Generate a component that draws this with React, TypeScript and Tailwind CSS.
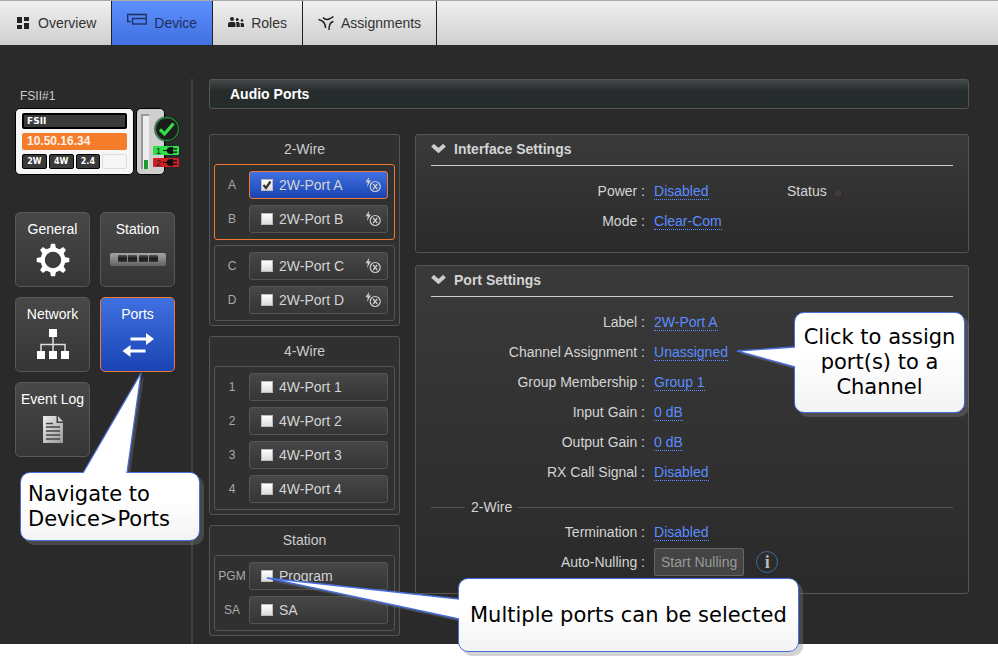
import { type ReactNode, useState } from 'react';

type Point = [number, number];

function OverviewIcon() {
  return (
    <svg width="16" height="16" viewBox="0 0 16 16" fill="#222" aria-hidden="true">
      <path d="M2 2h5v6H2zM9 2h5v4H9zM2 10h5v4H2zM9 8h5v6H9z" />
    </svg>
  );
}

function DeviceIcon() {
  return (
    <svg width="20" height="20" viewBox="0 0 20 20" fill="none" stroke="#1f2f5c" strokeWidth="1.3" aria-hidden="true">
      <path d="M3.5 8.500H.7v-7h18.600v3.500" />
      <rect x="5.500" y="5.500" width="13.800" height="5.500" />
    </svg>
  );
}

function RolesIcon() {
  return (
    <svg width="16" height="16" viewBox="0 0 16 16" fill="#222" aria-hidden="true">
      <circle cx="4" cy="4" r="2" />
      <circle cx="9.200" cy="4.500" r="1.500" />
      <circle cx="14" cy="5.500" r="1.300" />
      <path d="M0 12V9q0-2 2-2h3.500q2 0 2 2v3zM8.500 12V9q0-1-.8-1.900h2.500q1.500 0 1.500 1.700V12zM12.700 12V9.300q0-.9-.4-1.300h2.200q1.500 0 1.500 1.300V12z" />
    </svg>
  );
}

function AssignmentsIcon() {
  return (
    <svg width="16" height="16" viewBox="0 0 16 16" fill="none" stroke="#222" strokeWidth="1.500" aria-hidden="true">
      <path d="M.5 4.500Q7.500 6 7.500 13M5 2.500q2.500 3 6 1.500Q13.500 3 15.500 1.500M15.500 6.500Q11 7 11 15" />
    </svg>
  );
}

function GearIcon() {
  return (
    <svg width="34" height="34" viewBox="-17 -17 34 34" aria-hidden="true">
      <circle r="10.300" fill="none" stroke="#fff" strokeWidth="4.200" />
      {[0, 45, 90, 135, 180, 225, 270, 315].map(angle => (
        <path key={angle} d="M-3-11.500L-2-16.300H2L3-11.500z" fill="#fff" transform={`rotate(${angle})`} />
      ))}
    </svg>
  );
}

function StationIcon() {
  return (
    <svg width="56" height="34" viewBox="0 0 56 34" aria-hidden="true">
      <defs>
        <linearGradient id="station-body" x1="0" y1="0" x2="0" y2="1">
          <stop offset="0" stopColor="#a5a5a5" />
          <stop offset="1" stopColor="#626262" />
        </linearGradient>
        <linearGradient id="station-key" x1="0" y1="0" x2="0" y2="1">
          <stop offset="0" stopColor="#555" />
          <stop offset="0.500" stopColor="#1c1c1c" />
          <stop offset="1" stopColor="#333" />
        </linearGradient>
      </defs>
      <rect y="10" width="56" height="13" rx="2" fill="url(#station-body)" />
      {[8, 18, 29, 39].map(x => (
        <rect key={x} x={x} y="12" width="9" height="7" rx="1" fill="url(#station-key)" />
      ))}
    </svg>
  );
}

function NetworkIcon() {
  return (
    <svg width="34" height="34" viewBox="0 0 34 34" fill="#fff" aria-hidden="true">
      <path d="M13 1h8v8h-8zM1 23h8v8H1zM13 23h8v8h-8zM25 23h8v8h-8z" />
      <path d="M17 9v14M5 23v-6.500h24V23" fill="none" stroke="#ddd" strokeWidth="1.500" />
    </svg>
  );
}

function PortsIcon() {
  return (
    <svg width="34" height="34" viewBox="0 0 34 34" fill="#fff" aria-hidden="true">
      <path d="M9.500 9.500H25V5l8 6-8 6v-4.500H9.500zM24.500 21.500H9.500V17l-8 6 8 6v-4.500h15z" />
    </svg>
  );
}

function LogIcon() {
  return (
    <svg width="20" height="34" viewBox="0 0 20 34" aria-hidden="true">
      <defs>
        <linearGradient id="log-page" x1="0" y1="0" x2="1" y2="1">
          <stop offset="0" stopColor="#eee" />
          <stop offset="1" stopColor="#999" />
        </linearGradient>
      </defs>
      <path d="M0 3h13.500v7H20v20H0z" fill="url(#log-page)" />
      <path d="M15 3l5 5.500h-5z" fill="#ccc" />
      <path d="M3 10.500h7M3 14h14M3 18h14M3 22h14M3 26h14" stroke="#444" strokeWidth="1.300" />
    </svg>
  );
}

function SignalOffIcon() {
  return (
    <svg width="16" height="16" viewBox="0 0 16 16" fill="none" stroke="#ccc" aria-hidden="true">
      <path d="M4 0L.5 5.200h2.300L2 10l4-6.500H3.800z" fill="#ccc" stroke="none" />
      <circle cx="10.200" cy="9.500" r="5" strokeWidth="1.200" />
      <path d="M8.200 7l4 5M12.200 7l-4 5" strokeWidth="1.300" />
    </svg>
  );
}

function ChevronIcon() {
  return (
    <svg width="15" height="10" viewBox="0 0 15 10" aria-hidden="true">
      <path d="M1.500 1.300L7.500 6.500l6-5.200" fill="none" stroke="#ccc" strokeWidth="4" />
    </svg>
  );
}

function PlugBadge({ label, color }: { label: string; color: string }) {
  return (
    <svg width="26" height="9" viewBox="0 0 26 9" aria-hidden="true">
      <rect width="26" height="9" rx="1" fill={color} />
      <text x="3" y="8" fontSize="9" fontFamily="Liberation Sans, sans-serif" fill="#222">
        {label}
      </text>
      <path d="M10 4h3.500q1-3 4.500-3h2v1.200h4v1.300h-4v2h4v1.300h-4V8h-2q-3.500 0-4.500-3H10z" fill="#111" />
    </svg>
  );
}

function Callout({ className, bubble, tail, children }: { className: string; bubble: string; tail: Point[]; children: ReactNode }) {
  const points = tail.map(point => point.join(',')).join(' ');
  return (
    <div className={`absolute z-10 ${className}`}>
      <svg className="pointer-events-none absolute top-0 left-0 overflow-visible" width="1" height="1" aria-hidden="true">
        <polygon points={points} fill="#808080" fillOpacity="0.3" transform="translate(3 3)" />
      </svg>
      <div
        className={`relative flex items-center rounded-[10px] border border-[#4a6fdc] bg-linear-to-b from-white from-40% to-[#f3f3f3] font-['DejaVu_Sans',sans-serif] text-[21px] leading-[25px] text-black shadow-[4px_4px_0_rgba(128,128,128,0.35)] ${bubble}`}
      >
        {children}
      </div>
      <svg className="pointer-events-none absolute top-0 left-0 overflow-visible" width="1" height="1" aria-hidden="true">
        <polygon points={points} fill="#fff" />
        <polyline points={points} fill="none" stroke="#4a6fdc" strokeWidth="1.300" />
      </svg>
    </div>
  );
}

const TABS = [
  { label: 'Overview', icon: <OverviewIcon /> },
  { label: 'Device', icon: <DeviceIcon />, active: true },
  { label: 'Roles', icon: <RolesIcon /> },
  { label: 'Assignments', icon: <AssignmentsIcon /> },
];

function TopNav() {
  return (
    <nav className="flex h-[45px] border-t border-[#a8a8a8] bg-linear-to-b from-[#f0f0f0] to-[#cfcfcf]">
      {TABS.map(tab => (
        <a
          key={tab.label}
          href="#"
          className={`flex items-center gap-[7px] border-r border-[#222] px-[15px] ${
            tab.active ? 'bg-linear-to-b from-[#5c90ff] to-[#4270e0] text-[#1f2f5c]' : 'text-[#333]'
          }`}
        >
          {tab.icon}
          {tab.label}
        </a>
      ))}
    </nav>
  );
}

function DeviceCard() {
  return (
    <div className="flex gap-[2px]">
      <div className="w-[119px] rounded-[5px] border border-black bg-[#f6f6f6] px-[6px] pt-1 pb-[5px]">
        <div className="h-4 rounded-[2px] border-2 border-black bg-[#3a3a3a] pl-[3px] font-['DejaVu_Sans',sans-serif] text-[9px] leading-3 font-bold text-white">
          FSII
        </div>
        <div className="mt-1 h-[17px] rounded-[2px] bg-[#f57c2b] pl-[5px] text-[12px] leading-4 font-bold text-[#fff3e8]">10.50.16.34</div>
        <div className="mt-1 grid h-[15px] grid-cols-4 gap-[2px] text-center font-['DejaVu_Sans',sans-serif] text-[8px] leading-[13px] font-bold text-white">
          <span className="rounded-[2px] border border-black bg-[#3a3a3a]">2W</span>
          <span className="rounded-[2px] border border-black bg-[#3a3a3a]">4W</span>
          <span className="rounded-[2px] border border-black bg-[#3a3a3a]">2.4</span>
          <span className="rounded-[2px] border border-[#ddd]" />
        </div>
      </div>
      <div className="relative w-[29px] rounded-[5px] border border-black bg-[#cfcfcf] py-[5px] pl-1">
        <div className="flex h-[55px] w-2 flex-col justify-end border-t-2 border-l-2 border-[#999] bg-[#eee] px-px">
          <div className="h-[9px] bg-[#1d9a2c]" />
        </div>
        <div className="absolute top-[6px] left-4 flex flex-col gap-[3px]">
          <svg width="28" height="28" viewBox="0 0 28 28" aria-hidden="true">
            <circle cx="14" cy="14" r="13" fill="#111" fillOpacity="0.500" />
            <circle cx="14" cy="14" r="11.500" fill="#1d1d1d" stroke="#1f8a35" strokeWidth="1.300" />
            <path d="M7 14.500l4.500 4.500L20.500 8.500" fill="none" stroke="#2fe04d" strokeWidth="3.200" />
          </svg>
          <PlugBadge label="1" color="#2ee04a" />
          <PlugBadge label="2" color="#cf1f26" />
        </div>
      </div>
    </div>
  );
}

const TILES = [
  { label: 'General', icon: <GearIcon /> },
  { label: 'Station', icon: <StationIcon /> },
  { label: 'Network', icon: <NetworkIcon /> },
  { label: 'Ports', icon: <PortsIcon />, active: true },
  { label: 'Event Log', icon: <LogIcon /> },
];

function Sidebar() {
  return (
    <aside className="w-[193px] shrink-0 border-r-2 border-[#414141] pt-[9px] pl-[15px]">
      <h2 className="pl-[5px] text-[12px] leading-4 text-[#ccc]">FSII#1</h2>
      <div className="mt-1">
        <DeviceCard />
      </div>
      <div className="mt-[37px] grid w-[160px] grid-cols-2 gap-[10px]">
        {TILES.map(tile => (
          <div key={tile.label} className="relative">
            <button
              type="button"
              className={`flex h-[75px] w-full flex-col items-center gap-[6px] rounded-[5px] border pt-2 leading-4 text-white ${
                tile.active ? 'border-[#f07830] bg-linear-to-b from-[#4070e0] to-[#1a44b4]' : 'border-[#585858] bg-linear-to-b from-[#484848] to-[#363636]'
              }`}
            >
              {tile.label}
              {tile.icon}
            </button>
            {tile.active && (
              <Callout
                className="top-[175px] left-[-80px]"
                bubble="h-[69px] w-[180px] pl-[7px]"
                tail={[
                  [63, 1],
                  [121, -99],
                  [107, 1],
                ]}
              >
                <p>
                  Navigate to
                  <br />
                  Device&gt;Ports
                </p>
              </Callout>
            )}
          </div>
        ))}
      </div>
    </aside>
  );
}

type Port = { slot: string; name: string; signal?: boolean };

const PORT_BANKS: { title: string; groups: Port[][] }[] = [
  {
    title: '2-Wire',
    groups: [
      [
        { slot: 'A', name: '2W-Port A', signal: true },
        { slot: 'B', name: '2W-Port B', signal: true },
      ],
      [
        { slot: 'C', name: '2W-Port C', signal: true },
        { slot: 'D', name: '2W-Port D', signal: true },
      ],
    ],
  },
  {
    title: '4-Wire',
    groups: [
      [
        { slot: '1', name: '4W-Port 1' },
        { slot: '2', name: '4W-Port 2' },
        { slot: '3', name: '4W-Port 3' },
        { slot: '4', name: '4W-Port 4' },
      ],
    ],
  },
  {
    title: 'Station',
    groups: [
      [
        { slot: 'PGM', name: 'Program' },
        { slot: 'SA', name: 'SA' },
      ],
    ],
  },
];

function PortRow({ port, checked, onToggle }: { port: Port; checked: boolean; onToggle: () => void }) {
  return (
    <div className="relative flex items-center">
      <span className="w-[34px] text-center text-[12px] text-[#aaa]">{port.slot}</span>
      <label
        className={`flex h-7 flex-1 items-center gap-[6px] rounded-[3px] border pr-[6px] pl-[11px] text-[#d4d4d4] ${
          checked ? 'border-[#f07830] bg-linear-to-b from-[#4070e0] to-[#1a44b4]' : 'border-[#555] bg-linear-to-b from-[#474747] to-[#353535]'
        }`}
      >
        <span className="relative size-3">
          <input
            type="checkbox"
            checked={checked}
            onChange={onToggle}
            className="block size-3 appearance-none border border-[#bbb] bg-linear-to-b from-white to-[#dcdcdc]"
          />
          {checked && (
            <svg className="pointer-events-none absolute inset-0" width="12" height="12" viewBox="0 0 12 12" aria-hidden="true">
              <path d="M2.500 6l2.500 3 4.500-6.500" fill="none" stroke="#333" strokeWidth="2.200" />
            </svg>
          )}
        </span>
        <span className="flex-1">{port.name}</span>
        {port.signal && <SignalOffIcon />}
      </label>
      {port.slot === 'PGM' && (
        <Callout
          className="top-4 left-[243px]"
          bubble="h-[74px] w-[341px] pl-[11px] whitespace-nowrap"
          tail={[
            [1, 21],
            [-191, 0],
            [1, 41],
          ]}
        >
          Multiple ports can be selected
        </Callout>
      )}
    </div>
  );
}

function PortBanks() {
  const [selected, setSelected] = useState(['A']);

  const toggle = (slot: string) => {
    setSelected(current => (current.includes(slot) ? current.filter(item => item !== slot) : [...current, slot]));
  };

  return (
    <div className="flex w-[191px] shrink-0 flex-col gap-[10px]">
      {PORT_BANKS.map(bank => (
        <section key={bank.title} className="rounded-[3px] border border-[#555] bg-[#303030] px-1 pb-1">
          <h3 className="text-center leading-[29px] text-[#ccc]">{bank.title}</h3>
          <div className="flex flex-col gap-[5px]">
            {bank.groups.map(group => (
              <div
                key={group[0].slot}
                className={`flex flex-col gap-[6px] rounded-[3px] border py-[6px] pr-[6px] ${
                  group.some(port => selected.includes(port.slot)) ? 'border-[#f07830]' : 'border-[#555]'
                }`}
              >
                {group.map(port => (
                  <PortRow key={port.slot} port={port} checked={selected.includes(port.slot)} onToggle={() => toggle(port.slot)} />
                ))}
              </div>
            ))}
          </div>
        </section>
      ))}
    </div>
  );
}

function SettingsPanel({ title, children }: { title: string; children: ReactNode }) {
  return (
    <section className="rounded-[3px] border border-[#555] bg-linear-to-b from-[#3a3a3a] to-[#2a2a2a] px-[15px] pb-4">
      <h2 className="border-b border-[#ccc] font-bold text-[#d4d4d4]">
        <button type="button" className="flex h-[30px] w-full items-center gap-2 pb-[2px]">
          <ChevronIcon />
          {title}
        </button>
      </h2>
      <div className="pt-[10px]">{children}</div>
    </section>
  );
}

function SettingRow({ label, children }: { label: string; children: ReactNode }) {
  return (
    <div className="flex h-[30px] items-center gap-[9px] text-[#d4d4d4]">
      <span className="w-[41%] shrink-0 text-right">{label} :</span>
      <div className="relative flex items-center">{children}</div>
    </div>
  );
}

function ValueLink({ children }: { children: ReactNode }) {
  return (
    <a href="#" className="border-b border-dotted border-[#5b8cff] leading-4 text-[#5b8cff]">
      {children}
    </a>
  );
}

export default function App() {
  return (
    <div className="min-h-screen bg-white font-['Liberation_Sans',Arial,sans-serif] text-[14px] leading-5">
      <TopNav />
      <div className="flex bg-[#2a2a2a] pt-[34px]">
        <Sidebar />
        <main className="min-w-0 flex-1 pr-[29px] pb-2 pl-4">
          <h1 className="rounded-[3px] border border-[#555] bg-linear-to-b from-[#45494a] to-[#262b2c] to-40% pl-5 leading-7 font-bold text-white">
            Audio Ports
          </h1>
          <div className="mt-[25px] flex items-start gap-[15px]">
            <PortBanks />
            <div className="flex min-w-0 flex-1 flex-col gap-3">
              <SettingsPanel title="Interface Settings">
                <SettingRow label="Power">
                  <div className="w-[133px]">
                    <ValueLink>Disabled</ValueLink>
                  </div>
                  <span>Status</span>
                  <span className="mt-1 ml-[6px] size-[10px] rounded-full border border-[#2c2828] bg-[#413a3a]" />
                </SettingRow>
                <SettingRow label="Mode">
                  <ValueLink>Clear-Com</ValueLink>
                </SettingRow>
              </SettingsPanel>

              <SettingsPanel title="Port Settings">
                <SettingRow label="Label">
                  <ValueLink>2W-Port A</ValueLink>
                </SettingRow>
                <SettingRow label="Channel Assignment">
                  <ValueLink>Unassigned</ValueLink>
                  <Callout
                    className="top-[-32px] left-[140px]"
                    bubble="h-[101px] w-[171px] justify-center text-center"
                    tail={[
                      [1, 35],
                      [-57, 39],
                      [1, 55],
                    ]}
                  >
                    <p className="whitespace-nowrap">
                      Click to assign
                      <br />
                      port(s) to a<br />
                      Channel
                    </p>
                  </Callout>
                </SettingRow>
                <SettingRow label="Group Membership">
                  <ValueLink>Group 1</ValueLink>
                </SettingRow>
                <SettingRow label="Input Gain">
                  <ValueLink>0 dB</ValueLink>
                </SettingRow>
                <SettingRow label="Output Gain">
                  <ValueLink>0 dB</ValueLink>
                </SettingRow>
                <SettingRow label="RX Call Signal">
                  <ValueLink>Disabled</ValueLink>
                </SettingRow>
                <h3 className="flex items-center gap-[6px] pt-[10px] text-[#d4d4d4]">
                  <span className="h-px w-[34px] bg-[#555]" />
                  2-Wire
                  <span className="h-px flex-1 bg-[#555]" />
                </h3>
                <SettingRow label="Termination">
                  <ValueLink>Disabled</ValueLink>
                </SettingRow>
                <SettingRow label="Auto-Nulling">
                  <button type="button" className="h-7 rounded-[2px] border border-[#666] bg-[#444] px-[6px] text-[#999]">
                    Start Nulling
                  </button>
                  <button
                    type="button"
                    aria-label="About auto-nulling"
                    className="ml-3 size-[22px] rounded-full border border-[#3d6a9a] font-['Liberation_Serif',serif] text-[18px] leading-5 font-bold text-[#bbb]"
                  >
                    i
                  </button>
                </SettingRow>
              </SettingsPanel>
            </div>
          </div>
        </main>
      </div>
    </div>
  );
}
